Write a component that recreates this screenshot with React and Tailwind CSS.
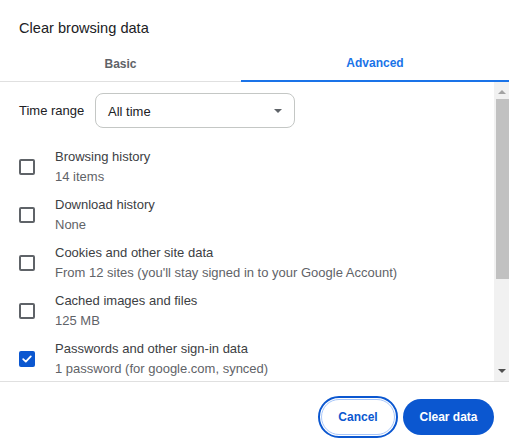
import React, { useState } from 'react';

const ITEMS = [
  { title: 'Browsing history', sub: '14 items', checked: false },
  { title: 'Download history', sub: 'None', checked: false },
  { title: 'Cookies and other site data', sub: "From 12 sites (you'll stay signed in to your Google Account)", checked: false },
  { title: 'Cached images and files', sub: '125 MB', checked: false },
  { title: 'Passwords and other sign-in data', sub: '1 password (for google.com, synced)', checked: true },
];

function Checkbox({ checked }) {
  if (checked) {
    return (
      <div className="w-[16px] h-[16px] rounded-[2px] bg-[#0b57d0] flex items-center justify-center shrink-0">
        <svg width="12" height="12" viewBox="0 0 12 12" fill="none">
          <path d="M2.2 6.2 L4.8 8.6 L9.8 3.4" stroke="white" strokeWidth="1.8" strokeLinecap="round" strokeLinejoin="round" />
        </svg>
      </div>
    );
  }
  return <div className="w-[16px] h-[16px] rounded-[2px] border-2 border-[#5f6368] shrink-0" />;
}

export default function App() {
  const [tab, setTab] = useState('advanced');

  return (
    <div className="w-[509px] h-[445px] bg-white flex flex-col overflow-hidden font-['Liberation_Sans',Arial,sans-serif] text-[#202124]">
      {/* Title */}
      <div className="h-[46px] pl-[19px] pt-[18px] text-[14.6px] leading-[20px] text-[#202124]">
        Clear browsing data
      </div>

      {/* Tabs */}
      <div className="flex h-[36px] border-b border-[#e0e0e0]">
        <button
          onClick={() => setTab('basic')}
          className="w-[241px] flex items-center justify-center text-[12px] font-bold text-[#5f6368]"
        >
          Basic
        </button>
        <button
          onClick={() => setTab('advanced')}
          className="flex-1 flex items-center justify-center text-[12px] font-bold text-[#1a73e8] border-b-2 border-[#1a73e8] -mb-px"
        >
          Advanced
        </button>
      </div>

      {/* Content + scrollbar */}
      <div className="h-[300px] flex border-b border-[#e0e0e0]">
        <div className="flex-1 overflow-hidden">
          <div className="flex items-center pt-[11px]">
            <div className="w-[95px] pl-[19px] pt-[1px] text-[13px] text-[#202124]">Time range</div>
            <div className="w-[200px] h-[35px] rounded-lg border border-[#c4c7c5] flex items-center justify-between pl-[12px] pr-[12px]">
              <span className="text-[13px] pt-[3px] text-[#202124]">All time</span>
              <svg width="8" height="4" viewBox="0 0 8 4">
                <path d="M0 0 L8 0 L4 4 z" fill="#5f6368" />
              </svg>
            </div>
          </div>
          <div className="mt-[15px] flex flex-col">
            {ITEMS.map((it) => (
              <div key={it.title} className="flex items-center py-[4px]">
                <div className="w-[55px] pl-[19px] flex">
                  <Checkbox checked={it.checked} />
                </div>
                <div className="flex flex-col text-[13px] leading-[20px]">
                  <span className="text-[#3c4043]">{it.title}</span>
                  <span className="text-[#5f6368]">{it.sub}</span>
                </div>
              </div>
            ))}
          </div>
        </div>
        <div className="w-[15px] bg-[#f1f1f1] flex flex-col">
          <div className="h-[17px] flex items-center justify-center pt-[3px]">
            <svg width="8" height="4" viewBox="0 0 8 4">
              <path d="M0 4 L8 4 L4 0 z" fill="#a3a3a3" />
            </svg>
          </div>
          <div className="h-[180px] ml-[2px] bg-[#c1c1c1]" />
          <div className="flex-1" />
          <div className="h-[17px] flex items-center justify-center pb-[3px]">
            <svg width="8" height="4" viewBox="0 0 8 4">
              <path d="M0 0 L8 0 L4 4 z" fill="#505050" />
            </svg>
          </div>
        </div>
      </div>

      {/* Footer */}
      <div className="flex justify-end gap-[8px] pt-[17px] pr-[15px]">
        <button className="w-[74px] h-[36px] rounded-full border border-[#a8c7fa] outline-2 outline-[#0b57d0] outline-offset-1 text-[12px] font-bold text-[#0b57d0]">
          Cancel
        </button>
        <button className="w-[91px] h-[36px] rounded-full bg-[#0b57d0] text-[12px] font-bold text-white">
          Clear data
        </button>
      </div>
    </div>
  );
}
